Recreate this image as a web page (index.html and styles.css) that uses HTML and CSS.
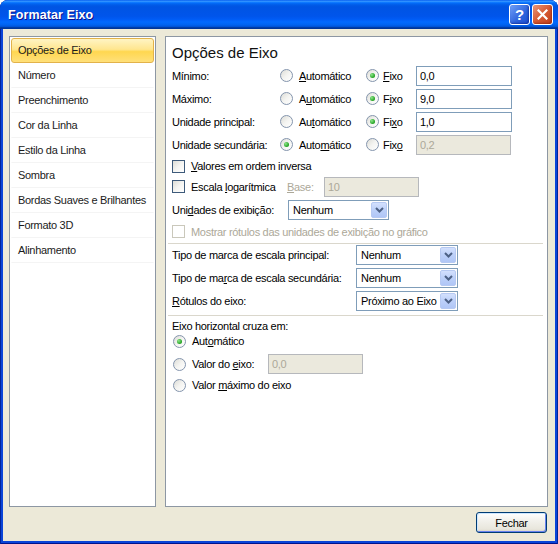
FILE: index.html
```html
<!DOCTYPE html>
<html lang="pt-BR">
<head>
  <meta charset="UTF-8">
  <title>Formatar Eixo</title>
  <link rel="stylesheet" href="styles.css">
</head>
<body>
  <div class="window">
    <div class="titlebar">
      <span class="title">Formatar Eixo</span>
      <div class="title-buttons">
        <span class="tb-btn help">?</span>
        <span class="tb-btn close">
          <svg width="11" height="11" viewBox="0 0 11 11"><path d="M1.5 1.5 L9.5 9.5 M9.5 1.5 L1.5 9.5" stroke="#fff" stroke-width="2.2" stroke-linecap="square"/></svg>
        </span>
      </div>
    </div>

    <div class="client">
      <div class="panes">
        <ul class="nav">
          <li class="active">Opções de Eixo</li>
          <li>Número</li>
          <li>Preenchimento</li>
          <li>Cor da Linha</li>
          <li>Estilo da Linha</li>
          <li>Sombra</li>
          <li>Bordas Suaves e Brilhantes</li>
          <li>Formato 3D</li>
          <li>Alinhamento</li>
        </ul>

        <div class="content">
          <h2>Opções de Eixo</h2>

          <div class="row axis">
            <span class="label">Mínimo:</span>
            <span class="opt auto"><span class="radio"></span><span><u>A</u>utomático</span></span>
            <span class="opt fixo"><span class="radio checked"></span><span><u>F</u>ixo</span></span>
            <span class="field">0,0</span>
          </div>
          <div class="row axis">
            <span class="label">Máximo:</span>
            <span class="opt auto"><span class="radio"></span><span>A<u>u</u>tomático</span></span>
            <span class="opt fixo"><span class="radio checked"></span><span>F<u>i</u>xo</span></span>
            <span class="field">9,0</span>
          </div>
          <div class="row axis">
            <span class="label">Unidade principal:</span>
            <span class="opt auto"><span class="radio"></span><span>Au<u>t</u>omático</span></span>
            <span class="opt fixo"><span class="radio checked"></span><span>Fi<u>x</u>o</span></span>
            <span class="field">1,0</span>
          </div>
          <div class="row axis">
            <span class="label">Unidade secundária:</span>
            <span class="opt auto"><span class="radio checked"></span><span>Auto<u>m</u>ático</span></span>
            <span class="opt fixo"><span class="radio"></span><span>Fix<u>o</u></span></span>
            <span class="field disabled">0,2</span>
          </div>

          <div class="row r-inverse">
            <span class="opt"><span class="checkbox"></span><span><u>V</u>alores em ordem inversa</span></span>
          </div>
          <div class="row r-log">
            <span class="opt log"><span class="checkbox"></span><span>Escala <u>l</u>ogarítmica</span></span>
            <span class="base muted"><u>B</u>ase:</span>
            <span class="field disabled">10</span>
          </div>
          <div class="row r-units">
            <span class="label units">Uni<u>d</u>ades de exibição:</span>
            <span class="select">
              <span class="select-text">Nenhum</span>
              <span class="select-btn"><svg width="9" height="6" viewBox="0 0 9 6"><path d="M1 1 L4.5 4.5 L8 1" fill="none" stroke="#4d6185" stroke-width="2"/></svg></span>
            </span>
          </div>
          <div class="row r-show">
            <span class="opt muted"><span class="checkbox disabled"></span><span>Mostrar rótulos das unidades de exibição no gráfico</span></span>
          </div>

          <div class="sep first"></div>

          <div class="row r-tick1">
            <span class="label tick">Tipo de marca de escala principal:</span>
            <span class="select wide">
              <span class="select-text">Nenhum</span>
              <span class="select-btn"><svg width="9" height="6" viewBox="0 0 9 6"><path d="M1 1 L4.5 4.5 L8 1" fill="none" stroke="#4d6185" stroke-width="2"/></svg></span>
            </span>
          </div>
          <div class="row r-tick2">
            <span class="label tick">Tipo de ma<u>r</u>ca de escala secundária:</span>
            <span class="select wide">
              <span class="select-text">Nenhum</span>
              <span class="select-btn"><svg width="9" height="6" viewBox="0 0 9 6"><path d="M1 1 L4.5 4.5 L8 1" fill="none" stroke="#4d6185" stroke-width="2"/></svg></span>
            </span>
          </div>
          <div class="row r-labels">
            <span class="label tick"><u>R</u>ótulos do eixo:</span>
            <span class="select wide">
              <span class="select-text">Próximo ao Eixo</span>
              <span class="select-btn"><svg width="9" height="6" viewBox="0 0 9 6"><path d="M1 1 L4.5 4.5 L8 1" fill="none" stroke="#4d6185" stroke-width="2"/></svg></span>
            </span>
          </div>

          <div class="sep second"></div>

          <div class="row r-cross">Eixo horizontal cruza em:</div>
          <div class="row r-cauto">
            <span class="opt cross"><span class="radio checked"></span><span>Aut<u>o</u>mático</span></span>
          </div>
          <div class="row r-cvalue">
            <span class="opt cross value"><span class="radio"></span><span>Valor do <u>e</u>ixo:</span></span>
            <span class="field disabled">0,0</span>
          </div>
          <div class="row r-cmax">
            <span class="opt cross"><span class="radio"></span><span>Valor <u>m</u>áximo do eixo</span></span>
          </div>
        </div>
      </div>

      <div class="footer">
        <span class="button">Fechar</span>
      </div>
    </div>
  </div>
</body>
</html>
```

FILE: styles.css
```css
* {
  margin: 0;
  padding: 0;
  box-sizing: border-box;
}

body {
  background: #fff;
  font-family: "Liberation Sans", Arial, sans-serif;
  font-size: 11px;
  letter-spacing: -0.3px;
  color: #000;
}

u {
  text-decoration: underline;
  text-underline-offset: 1px;
}

.window {
  width: 558px;
  height: 544px;
  display: flex;
  flex-direction: column;
  background: #0a44d8;
  border-radius: 8px 8px 0 0;
  overflow: hidden;
  box-shadow: inset 1px 0 #00239a, inset -1px 0 #00239a, inset 0 -1px #00138c;
}

/* title bar */
.titlebar {
  height: 29px;
  display: flex;
  align-items: center;
  justify-content: space-between;
  padding: 0 5px 0 8px;
  background: linear-gradient(to bottom, #0058ee 0%, #3593ff 4%, #288eff 6%, #127dff 8%, #036ffc 10%, #0262ee 14%, #0057e5 20%, #0054e3 24%, #0055eb 56%, #005bf5 66%, #026afe 76%, #0062ef 86%, #0052d6 92%, #0040ab 94%, #003092 100%);
}

.title {
  color: #fff;
  font-weight: bold;
  font-size: 12.5px;
  letter-spacing: 0.1px;
  text-shadow: 1px 1px #0f1089;
}

.title-buttons {
  display: flex;
  gap: 2px;
}

.tb-btn {
  width: 21px;
  height: 21px;
  border: 1px solid #fff;
  border-radius: 3px;
  display: flex;
  align-items: center;
  justify-content: center;
  color: #fff;
}

.tb-btn.help {
  background: linear-gradient(135deg, #6f9ff8 0%, #2d63dc 60%, #1d4fd0 100%);
  font-weight: bold;
  font-size: 15px;
  box-shadow: inset -1px -1px 2px rgba(0, 20, 120, 0.5);
}

.tb-btn.close {
  background: linear-gradient(135deg, #e9977a 0%, #d65a33 50%, #c2401c 100%);
  box-shadow: inset -1px -1px 2px rgba(120, 20, 0, 0.5);
}

/* client area */
.client {
  flex: 1;
  margin: 0 3px 3px;
  background: #ece9d8;
  display: flex;
  flex-direction: column;
}

.panes {
  display: flex;
  gap: 9px;
  padding: 7px 7px 0 6px;
  height: 478px;
}

.nav {
  list-style: none;
  width: 147px;
  background: #fff;
  border: 1px solid #8d97a3;
  padding: 1px;
}

.nav li {
  height: 25px;
  line-height: 23px;
  padding-left: 6px;
  border: 1px solid transparent;
  border-bottom-color: #f4f4f4;
  color: #1b1b1b;
  white-space: nowrap;
}

.nav li.active {
  border: 1px solid #e2b24a;
  border-radius: 3px;
  background: linear-gradient(to bottom, #fff4c4 0%, #ffe68f 45%, #ffd750 55%, #ffe07a 100%);
}

.content {
  flex: 1;
  background: #fff;
  border: 1px solid #8d97a3;
  padding: 0 4px 0 6px;
}

.content h2 {
  font-weight: normal;
  font-size: 15px;
  letter-spacing: 0;
  height: 22px;
  line-height: 22px;
  margin-top: 5px;
  color: #111;
}

.row {
  display: flex;
  align-items: center;
  white-space: nowrap;
}

.row.axis { height: 23px; }
.r-inverse { height: 20px; }
.r-log { height: 21px; }
.r-units { height: 25px; }
.r-show { height: 19px; }
.r-tick1 { height: 22px; }
.r-tick2 { height: 24px; }
.r-labels { height: 22px; }
.r-cross { height: 16px; margin-top: 2px; }
.r-cauto { height: 14px; }
.r-cvalue { height: 24px; margin-top: 4px; }
.r-cmax { height: 18px; }

.label { width: 108px; }
.label.units { width: 116px; }
.label.tick { width: 184px; }

.opt {
  display: flex;
  align-items: center;
  gap: 6px;
}

.opt.auto { width: 86px; }
.opt.fixo { width: 50px; gap: 4px; }
.opt.log { width: 115px; }
.opt.cross { padding-left: 1px; }
.opt.value { width: 96px; }

.muted { color: #aca899; }
.base { width: 37px; }

/* radio buttons */
.radio {
  width: 13px;
  height: 13px;
  border: 1px solid #8495ad;
  border-radius: 50%;
  background: linear-gradient(135deg, #dcdcd6 0%, #f4f4f1 50%, #fff 100%);
  position: relative;
  flex: none;
}

.radio.checked::after {
  content: '';
  position: absolute;
  left: 3px;
  top: 3px;
  width: 5px;
  height: 5px;
  border-radius: 50%;
  background: radial-gradient(circle at 35% 35%, #8ee68a, #21a121 70%);
}

/* checkboxes */
.checkbox {
  width: 13px;
  height: 13px;
  border: 1px solid #3d5a7a;
  background: linear-gradient(135deg, #dcdcd6 0%, #f4f4f1 50%, #fff 100%);
  flex: none;
}

.checkbox.disabled {
  border-color: #cac8bb;
  background: #fff;
}

/* text fields */
.field {
  width: 96px;
  height: 20px;
  border: 1px solid #7f9db9;
  background: #fff;
  line-height: 18px;
  padding-left: 3px;
}

.field.disabled {
  width: 95px;
  background: #ebe9dd;
  border-color: #b6b8bc;
  color: #aca899;
}

/* combo boxes */
.select {
  width: 101px;
  height: 20px;
  border: 1px solid #7f9db9;
  background: #fff;
  display: flex;
  align-items: center;
  justify-content: space-between;
  padding: 1px;
}

.select.wide { width: 102px; }

.select-text { padding-left: 3px; }

.select-btn {
  width: 16px;
  height: 16px;
  border: 1px solid #b6c9f2;
  border-radius: 2px;
  background: linear-gradient(to bottom, #d3e0fd 0%, #bcd0f9 50%, #b0c6f6 100%);
  display: flex;
  align-items: center;
  justify-content: center;
}

.sep {
  height: 1px;
  background: #dad7cc;
  margin-left: -4px;
}

.sep.first { margin-top: 2px; }
.sep.second { margin-top: 3px; }

/* footer */
.footer {
  display: flex;
  justify-content: flex-end;
  padding: 5px 8px 0 0;
}

.button {
  width: 71px;
  height: 21px;
  border: 1px solid #003c74;
  border-radius: 3px;
  background: linear-gradient(to bottom, #fff 0%, #f2f1ec 40%, #e8e6dc 85%, #d6d0c5 100%);
  box-shadow: inset 1px 1px #cee7ff, inset -1px -1px #6982ee;
  display: flex;
  align-items: center;
  justify-content: center;
}
```
